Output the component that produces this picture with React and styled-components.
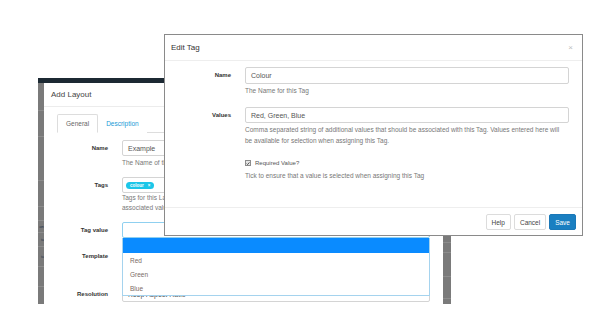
import styled, { createGlobalStyle } from "styled-components";

const GlobalStyle = createGlobalStyle`
  html, body {
    margin: 0;
    padding: 0;
    background: #fff;
  }
  body {
    font-family: "Liberation Sans", Arial, sans-serif;
  }
  * {
    box-sizing: border-box;
  }
`;

const Scene = styled.div`
  position: relative;
  width: 601px;
  height: 330px;
  overflow: hidden;
  background: #fff;
`;

// screenshot of the page behind (Add Layout dialog)
const Backdrop = styled.div`
  position: absolute;
  left: 38px;
  top: 78px;
  width: 413px;
  height: 226px;
  display: flex;
  flex-direction: column;
  overflow: hidden;
`;

const NavStrip = styled.div`
  height: 5px;
  flex-shrink: 0;
  background: #1c2933;
`;

const BackdropRow = styled.div`
  flex: 1;
  display: flex;
  min-height: 0;
`;

const SideStrip = styled.div`
  width: ${(p) => p.$w}px;
  flex-shrink: 0;
  background: #7a7a7a;
  display: flex;
  flex-direction: column;
  overflow: hidden;
`;

const StripCell = styled.div`
  height: ${(p) => p.$h}px;
  flex-shrink: 0;
  border-bottom: 1px solid #8c8c8c;
  font-size: 3.5px;
  line-height: ${(p) => p.$h}px;
  color: #26384a;
  white-space: nowrap;
  text-align: right;
`;

const LayoutModal = styled.div`
  flex: 1;
  background: #fff;
  display: flex;
  flex-direction: column;
`;

const LayoutHeader = styled.div`
  height: 24px;
  flex-shrink: 0;
  padding: 0 7px;
  display: flex;
  align-items: center;
  border-bottom: 1px solid #ececec;
  font-size: 8px;
  color: #444;
`;

const LayoutBody = styled.div`
  padding: 7px 13px 0;
`;

const Tabs = styled.div`
  display: flex;
  height: 19px;
  border-bottom: 1px solid #ddd;
`;

const Tab = styled.div`
  padding: 0 ${(p) => (p.$active ? 8 : 7)}px;
  line-height: 18px;
  font-size: 6.5px;
  color: ${(p) => (p.$active ? "#666" : "#1a9ad6")};
  background: #fff;
  border: 1px solid ${(p) => (p.$active ? "#ddd" : "transparent")};
  border-bottom-color: ${(p) => (p.$active ? "#fff" : "transparent")};
  border-radius: 2px 2px 0 0;
  margin-bottom: -1px;
`;

const LayoutForm = styled.div`
  margin-top: 7px;
  display: flex;
  flex-direction: column;
`;

const LayoutRow = styled.div`
  display: grid;
  grid-template-columns: 51px 1fr;
  column-gap: 14px;
  margin-bottom: ${(p) => p.$mb || 0}px;
`;

const RowLabel = styled.div`
  text-align: right;
  font-weight: bold;
  font-size: 6px;
  line-height: ${(p) => p.$h || 16}px;
  color: #333;
`;

const FieldCol = styled.div`
  position: relative;
  display: flex;
  flex-direction: column;
`;

const Input = styled.div`
  height: ${(p) => p.$h || 16}px;
  border: 1px solid ${(p) => (p.$focus ? "#8fd0f0" : "#d4d4d4")};
  border-radius: 2px;
  padding: 0 5px;
  display: flex;
  align-items: center;
  font-size: 7px;
  color: #555;
  background: #fff;
  white-space: nowrap;
  overflow: hidden;
`;

const Hint = styled.div`
  font-size: 6.5px;
  line-height: ${(p) => p.$lh || 10}px;
  margin-top: ${(p) => p.$mt || 0}px;
  color: #777;
  white-space: nowrap;
`;

const TagBadge = styled.span`
  display: inline-flex;
  align-items: center;
  gap: 4px;
  height: 7px;
  padding: 0 4px;
  border-radius: 4px;
  background: #1cc6e8;
  color: #fff;
  font-size: 4.5px;
  font-weight: bold;
  margin-left: -2px;
`;

const Dropdown = styled.div`
  position: absolute;
  top: 100%;
  left: 0;
  right: 0;
  background: #fff;
  border: 1px solid #a5d3ee;
  border-top: none;
  z-index: 2;
`;

const DropOption = styled.div`
  height: ${(p) => (p.$selected ? 15 : 14)}px;
  padding: 0 7px;
  display: flex;
  align-items: center;
  font-size: 6.5px;
  color: #7a6a64;
  background: ${(p) => (p.$selected ? "#0a8bff" : "#fff")};
`;

// Edit Tag dialog on top
const TagModal = styled.div`
  position: absolute;
  left: 164px;
  top: 34px;
  width: 419px;
  height: 202px;
  border: 1px solid #8a8a8a;
  background: #fff;
  display: flex;
  flex-direction: column;
  z-index: 5;
`;

const TagHeader = styled.div`
  height: 26px;
  flex-shrink: 0;
  padding: 0 6px;
  display: flex;
  align-items: center;
  justify-content: space-between;
  border-bottom: 1px solid #eeeeee;
`;

const TagTitle = styled.div`
  font-size: 8px;
  color: #333;
`;

const Close = styled.span`
  font-size: 8px;
  color: #bdbdbd;
  margin-right: 3px;
`;

const TagBody = styled.div`
  flex: 1;
  padding: 6px 13px 0 6px;
  display: flex;
  flex-direction: column;
`;

const TagRow = styled.div`
  display: grid;
  grid-template-columns: 60px 1fr;
  column-gap: 14px;
  margin-top: ${(p) => p.$mt || 0}px;
`;

const CheckLine = styled.label`
  display: flex;
  align-items: center;
  gap: 4px;
  height: 10px;
  font-size: 6px;
  color: #555;
`;

const CheckBox = styled.span`
  width: 6px;
  height: 6px;
  border: 1px solid #8d8d8d;
  background: #e6e6e6;
  display: inline-flex;
  align-items: center;
  justify-content: center;
`;

const TagFooter = styled.div`
  flex-shrink: 0;
  padding: 6px 6px 5px;
  border-top: 1px solid #eeeeee;
  display: flex;
  justify-content: flex-end;
  gap: 3px;
`;

const Button = styled.button`
  height: 16px;
  padding: 0 ${(p) => p.$px || 5}px;
  border: 1px solid ${(p) => (p.$primary ? "#1a78b8" : "#dcdcdc")};
  border-radius: 2px;
  background: ${(p) => (p.$primary ? "#1a7fc1" : "#fff")};
  color: ${(p) => (p.$primary ? "#fff" : "#444")};
  font-family: inherit;
  font-size: 6.5px;
  cursor: pointer;
`;

const leftCells = [
  { h: 28, t: "" },
  { h: 26, t: "" },
  { h: 44, t: "" },
  { h: 26, t: "" },
  { h: 14, t: "" },
  { h: 12, t: "am" },
  { h: 14, t: "ta" },
  { h: 20, t: "ta" },
  { h: 20, t: "" },
];

const rightCells = [
  { h: 160, t: "" },
  { h: 10, t: "" },
  { h: 24, t: "" },
  { h: 22, t: "" },
];

const App = () => {
  return (
    <>
      <GlobalStyle />
      <Scene>
        <Backdrop>
          <NavStrip />
          <BackdropRow>
            <SideStrip $w={6}>
              {leftCells.map((c, i) => (
                <StripCell key={i} $h={c.h}>{c.t}</StripCell>
              ))}
            </SideStrip>
            <LayoutModal>
              <LayoutHeader>Add Layout</LayoutHeader>
              <LayoutBody>
                <Tabs>
                  <Tab $active>General</Tab>
                  <Tab>Description</Tab>
                </Tabs>
                <LayoutForm>
                  <LayoutRow $mb={10}>
                    <RowLabel>Name</RowLabel>
                    <FieldCol>
                      <Input>Example</Input>
                      <Hint $mt={2} $lh={9}>The Name of this Layout</Hint>
                    </FieldCol>
                  </LayoutRow>
                  <LayoutRow $mb={9}>
                    <RowLabel>Tags</RowLabel>
                    <FieldCol>
                      <Input>
                        <TagBadge>colour <span>×</span></TagBadge>
                      </Input>
                      <Hint>Tags for this Layout - Comma separated string of Tags or Tag|Value format.</Hint>
                      <Hint>associated values</Hint>
                    </FieldCol>
                  </LayoutRow>
                  <LayoutRow $mb={10}>
                    <RowLabel>Tag value</RowLabel>
                    <FieldCol>
                      <Input $focus />
                      <Dropdown>
                        <DropOption $selected />
                        <DropOption>Red</DropOption>
                        <DropOption>Green</DropOption>
                        <DropOption>Blue</DropOption>
                      </Dropdown>
                    </FieldCol>
                  </LayoutRow>
                  <LayoutRow $mb={23}>
                    <RowLabel>Template</RowLabel>
                    <FieldCol>
                      <Input />
                    </FieldCol>
                  </LayoutRow>
                  <LayoutRow>
                    <RowLabel $h={15}>Resolution</RowLabel>
                    <FieldCol>
                      <Input $h={15}>Keep Aspect Ratio</Input>
                    </FieldCol>
                  </LayoutRow>
                </LayoutForm>
              </LayoutBody>
            </LayoutModal>
            <SideStrip $w={8}>
              {rightCells.map((c, i) => (
                <StripCell key={i} $h={c.h}>{c.t}</StripCell>
              ))}
            </SideStrip>
          </BackdropRow>
        </Backdrop>

        <TagModal>
          <TagHeader>
            <TagTitle>Edit Tag</TagTitle>
            <Close>×</Close>
          </TagHeader>
          <TagBody>
            <TagRow>
              <RowLabel $h={17}>Name</RowLabel>
              <FieldCol>
                <Input $h={17}>Colour</Input>
                <Hint $mt={2}>The Name for this Tag</Hint>
              </FieldCol>
            </TagRow>
            <TagRow $mt={11}>
              <RowLabel>Values</RowLabel>
              <FieldCol>
                <Input>Red, Green, Blue</Input>
                <Hint $mt={1} $lh={11}>
                  Comma separated string of additional values that should be associated with this Tag. Values entered here will
                </Hint>
                <Hint $lh={11}>be available for selection when assigning this Tag.</Hint>
              </FieldCol>
            </TagRow>
            <TagRow $mt={12}>
              <div />
              <FieldCol>
                <CheckLine>
                  <CheckBox>
                    <svg width="5" height="5" viewBox="0 0 10 10">
                      <path d="M1.5 5.2 L4 7.6 L8.6 2.2" fill="none" stroke="#333" strokeWidth="2" />
                    </svg>
                  </CheckBox>
                  Required Value?
                </CheckLine>
                <Hint $mt={3}>Tick to ensure that a value is selected when assigning this Tag</Hint>
              </FieldCol>
            </TagRow>
          </TagBody>
          <TagFooter>
            <Button>Help</Button>
            <Button>Cancel</Button>
            <Button $primary>Save</Button>
          </TagFooter>
        </TagModal>
      </Scene>
    </>
  );
};

export default App;
